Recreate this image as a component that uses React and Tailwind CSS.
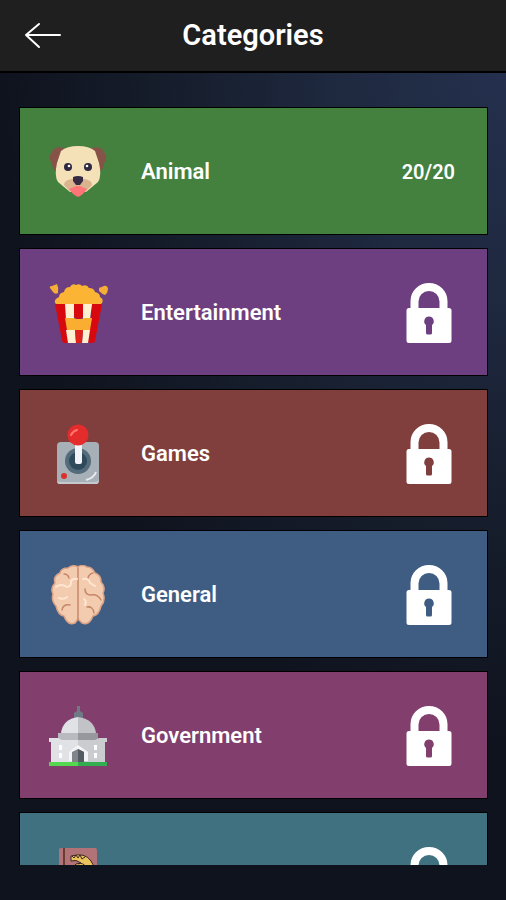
import clsx from "clsx";

/* ================= ICONS ================= */

const BackArrow = () => (
  <svg viewBox="0 0 38 28" className="w-[38px] h-[28px]" fill="none" stroke="#fff" strokeWidth="2" strokeLinecap="round" strokeLinejoin="round">
    <path d="M36 13H2M15 2L2 13l13 12" />
  </svg>
);

const Lock = () => (
  <svg viewBox="0 0 46 60" className="w-[46px] h-[60px]" fill="#fff">
    <path
      fillRule="evenodd"
      d="M4.500 25V18a18.500 18 0 0 1 37 0v7H43a2.500 2.500 0 0 1 2.500 2.500v30A2.500 2.500 0 0 1 43 60H3a2.500 2.500 0 0 1-2.500-2.500v-30A2.500 2.500 0 0 1 3 25zM12.500 25h21V18.500a10.500 10.500 0 0 0-21 0zM23 33.500a4.800 4.800 0 0 0-3 8.500v8a1.500 1.500 0 0 0 1.500 1.500h3A1.500 1.500 0 0 0 26 50v-8a4.800 4.800 0 0 0-3-8.500z"
    />
  </svg>
);

const Dog = () => (
  <svg viewBox="0 0 60 60" className="w-[60px] h-[60px]">
    <path d="M15 6Q8 4 5 7L1 13Q0 18 3 21Q3 27 7 29L12 26L20 8zM43 6Q50 4 53 7L57 13Q58 18 55 21Q55 27 51 29L46 26L38 8z" fill="#875349" />
    <path d="M12 9Q18 4 29 4Q40 4 46 9L50 21Q53 34 49 40L37 50H21L9 40Q5 34 8 21z" fill="#f5e1b8" />
    <path d="M15 43Q15 38 23 37L29 35L35 37Q43 38 43 43L36 50H22z" fill="#d9b48f" />
    <path d="M20 47L27 44H31L38 47Q35 52 29 55Q23 52 20 47z" fill="#ff7678" />
    <path d="M24 35q5-2 10 0v4l-3 4h-4l-3-4z" fill="#352c43" />
    <circle cx="19" cy="25" r="4" fill="#2d2942" />
    <circle cx="39" cy="25" r="4" fill="#2d2942" />
    <circle cx="20" cy="24" r="1.300" fill="#fff" />
    <circle cx="38" cy="24" r="1.300" fill="#fff" />
  </svg>
);

const Popcorn = () => (
  <svg viewBox="0 0 60 60" className="w-[60px] h-[60px]">
    <path d="M1 5Q0 3 3 3L8 1Q10 5 9 10Q6 12 4 9zM50 6Q50 4 53 4Q57 1 59 5Q59 10 56 12Q53 11 50 8z" fill="#f5ad35" />
    <path d="M6 20q-1-4 4-6 0-4 5-5 1-5 6-5 2-4 6-2 4-2 6 1 5-2 7 2 5 0 6 4 5 1 5 5 4 2 2 6l-3 3H10z" fill="#fbb433" />
    <path d="M6 21h10L21 60h-6q-2-1-2-3zM43 21h10L46 58q0 2-5 2l-2-1z" fill="#d7090e" />
    <path d="M16 21h9v15h-8zM34 21h9l-2 15h-7zM17 47h9l1 13h-8zM34 47h7l-2 13h-6z" fill="#fff0d1" />
    <path d="M25 21h9v13l-3 2h-3l-3-2z" fill="#d7090e" />
    <path d="M16 35h9l2 1h6l2-1h8l-2 12H18z" fill="#f9ae32" />
    <path d="M26 47h8l-1 13h-6z" fill="#df2118" />
  </svg>
);

const Joystick = () => (
  <svg viewBox="0 0 60 60" className="w-[60px] h-[60px]">
    <rect x="8" y="18" width="42" height="42" rx="4" fill="#a7b0b7" />
    <path d="M10 60h38q2-1 2-4v-1q-1 3-4 3H12q-4 0-4-2 0 4 2 4z" fill="#c3c9cd" />
    <circle cx="29" cy="37" r="13" fill="#536b7a" />
    <circle cx="29" cy="37" r="9" fill="#2f4a5b" />
    <rect x="26" y="18" width="7" height="22" rx="2" fill="#f1f3f8" />
    <circle cx="29" cy="11" r="10.500" fill="#e52c2d" />
    <path d="M22 11q2-4 6-5" stroke="#ff7770" strokeWidth="2" fill="none" strokeLinecap="round" />
    <circle cx="15" cy="52" r="3" fill="#db302e" />
    <path d="M37 56q8-2 10-8" stroke="#e6eaed" strokeWidth="2" fill="none" />
  </svg>
);

const Brain = () => (
  <svg viewBox="0 0 60 60" className="w-[60px] h-[60px]" strokeLinecap="round" strokeLinejoin="round">
    <path
      d="M29 2Q24-1 19 3Q12 3 11 8Q4 11 6 18Q1 23 4 29Q2 36 7 41Q9 50 15 51Q19 61 26 58L29 54L33 58Q40 61 44 51Q50 50 52 41Q57 35 54 28Q57 22 52 17Q52 10 46 8Q43 2 38 2Q33-1 29 2z"
      fill="#f3ccb0"
      stroke="#dba286"
      strokeWidth="1.500"
    />
    <path d="M29 3V55M15 9q4 0 5 4M44 8q-4 1-5 5M36 24q0 6 6 6 7-1 10 5M13 45q1-6 8-5M38 42q6-1 7 6" stroke="#c78669" strokeWidth="1.500" fill="none" />
    <path d="M7 22q5-4 11 0 5-1 4-6 2-3 6-2M10 33q5 2 8-1M34 14q6-1 7 4l5 3M35 34q3 2 1 6" stroke="#ffe5d2" strokeWidth="2" fill="none" />
  </svg>
);

const Capitol = () => (
  <svg viewBox="0 0 60 60" className="w-[60px] h-[60px]">
    <path d="M28 0h3v5l3 2v7h-9V7l3-2z" fill="#6f7a85" />
    <path d="M12 27Q14 13 29 11V30H12z" fill="#e1e2e5" />
    <path d="M29 11Q45 13 47 27v3H29z" fill="#c2c3c7" />
    <path d="M9 27h20v8H9z" fill="#b9babf" />
    <path d="M29 27h20v8H29z" fill="#96989d" />
    <path d="M0 32h9l4 2h16v22H2V36H0z" fill="#e1e2e5" />
    <path d="M29 34h17l4-2h8v4h-2v20H29z" fill="#cbccd0" />
    <path d="M20 55V46l9-7 10 7v9z" fill="#f4f5f7" />
    <path d="M23 56V46l6-3 6 3v10z" fill="#80858b" />
    <path d="M29 43l6 3v10h-6z" fill="#555b62" />
    <path d="M10 39h3v5h-3zM10 47h3v5h-3zM45 39h3v5h-3zM45 47h3v5h-3z" fill="#fff" />
    <path d="M0 56h29v4H0z" fill="#54d84f" />
    <path d="M29 56h29v4H29z" fill="#32ad50" />
  </svg>
);

const Book = () => (
  <svg viewBox="0 0 60 60" className="w-[60px] h-[60px]">
    <rect x="10" y="1" width="38" height="57" rx="2" fill="#b17377" />
    <path d="M15 1v57" stroke="#693e32" strokeWidth="2" />
    <path d="M22 9q14-4 20 5l4 7-5-1q-4 5-11 3l-8-1 5-5 5-1q-5-4-10-2z" fill="#eac35d" stroke="#3b2520" />
    <path d="M23 9l2 2 2-3 2 3 2-3 2 4 3-2M29 17q5-2 8 3" stroke="#3b2520" fill="none" />
  </svg>
);

const categories = [
  { id: 1, name: "Animal", icon: Dog, color: "bg-[#44813f]", progress: "20/20" },
  { id: 2, name: "Entertainment", icon: Popcorn, color: "bg-[#6d3f80]" },
  { id: 3, name: "Games", icon: Joystick, color: "bg-[#803f3d]" },
  { id: 4, name: "General", icon: Brain, color: "bg-[#3f5d82]" },
  { id: 5, name: "Government", icon: Capitol, color: "bg-[#823e6c]" },
  { id: 6, name: "", icon: Book, color: "bg-[#407180]" },
];

const CategoryCard = ({ name, icon: Icon, color, progress }) => (
  <button
    type="button"
    aria-label={name || "Locked category"}
    className={clsx(
      "flex w-full h-32 shrink-0 items-center border border-black pl-[29px] pt-px text-left text-white",
      progress ? "pr-8" : "pr-[35px]",
      color
    )}
  >
    <Icon />
    <span className="ml-8 flex-1 text-[22px] font-semibold">{name}</span>
    {progress ? (
      <span className="text-xl font-semibold">{progress}</span>
    ) : (
      <Lock />
    )}
  </button>
);

export default function App() {
  return (
    <div className="flex h-screen flex-col bg-[#10141f] bg-[radial-gradient(ellipse_100%_75%_at_100%_8%,#24304e_0%,#1e283e_35%,#151c2a_70%,#0f131e_100%)] font-['Roboto','Liberation_Sans',sans-serif]">
      {/* HEADER */}
      <header className="grid h-[73px] shrink-0 grid-cols-[1fr_auto_1fr] items-center border-b-2 border-black bg-[#1f1f1f] px-6">
        <button type="button" aria-label="Back" className="justify-self-start">
          <BackArrow />
        </button>
        <h1 className="text-[29px] font-semibold text-white">Categories</h1>
      </header>

      {/* CATEGORY LIST */}
      <main className="ml-[19px] mr-[18px] mt-[34px] mb-[35px] flex min-h-0 flex-1 flex-col gap-[13px] overflow-y-auto [scrollbar-width:none]">
        {categories.map((c) => (
          <CategoryCard key={c.id} {...c} />
        ))}
      </main>
    </div>
  );
}
